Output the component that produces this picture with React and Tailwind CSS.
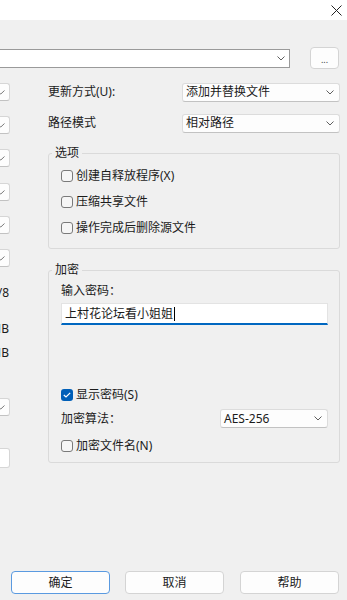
import React from 'react';

const font = "font-['Segoe_UI','Noto_Sans','Noto_Sans_CJK_SC',sans-serif]";

function Chevron() {
  return (
    <svg width="8" height="5" viewBox="0 0 8 5" fill="none">
      <path d="M0.5 0.5 L4 4 L7.5 0.5" stroke="#5f5f5f" strokeWidth="1" />
    </svg>
  );
}

function Combo({ text, className = '' }) {
  return (
    <div className={`flex h-[19px] items-center justify-between rounded-[3px] border border-[#dcdcdc] border-b-[#c2c2c2] bg-[#fdfdfd] pl-[3px] pr-[5px] ${className}`}>
      <span className="leading-[16px] text-[#1b1b1b]">{text}</span>
      <Chevron />
    </div>
  );
}

function Check({ label, checked }) {
  return (
    <div className="flex h-[16px] items-center">
      {checked ? (
        <span className="flex h-[12px] w-[12px] items-center justify-center rounded-[3px] bg-[#005fb8]">
          <svg width="8" height="6" viewBox="0 0 8 6" fill="none">
            <path d="M0.8 3 L3 5 L7.2 0.8" stroke="white" strokeWidth="1.2" />
          </svg>
        </span>
      ) : (
        <span className="h-[12px] w-[12px] rounded-[3px] border border-[#7a7a7a] bg-[#f6f6f6]" />
      )}
      <span className="ml-[3px] leading-[16px] text-[#1b1b1b]">{label}</span>
    </div>
  );
}

// left edge of the dialog is cut off: only the right ends of its widgets show
function EdgeBox({ className = '' }) {
  return (
    <div className={`flex h-[18px] w-[10px] items-center overflow-hidden rounded-r-[3px] border border-l-0 border-[#d6d6d6] border-b-[#c2c2c2] bg-[#fdfdfd] ${className}`}>
      <svg width="9" height="5" viewBox="0 0 9 5" fill="none">
        <path d="M-3 0.5 L0.8 4 L4.5 0.5" stroke="#7a7a7a" strokeWidth="1" />
      </svg>
    </div>
  );
}

function EdgeText({ text, className = '' }) {
  return (
    <div className={`flex h-[16px] w-[10px] justify-end overflow-hidden pr-[1px] ${className}`}>
      <span className="whitespace-nowrap leading-[16px] text-[#1b1b1b]">{text}</span>
    </div>
  );
}

function Group({ title, className = '', children }) {
  return (
    <fieldset className={`rounded-[3px] border border-[#dadada] pl-[12px] pr-[11px] ${className}`}>
      <legend className="ml-[-9px] px-[3px] leading-[16px] text-[#1b1b1b]">{title}</legend>
      {children}
    </fieldset>
  );
}

function Button({ label, primary, className = '' }) {
  return (
    <div
      className={`flex h-[23px] w-[99px] items-center justify-center rounded-[4px] border bg-[#fdfdfd] leading-[16px] text-[#1b1b1b] ${
        primary ? 'border-[#5a9ae0]' : 'border-[#d4d4d4]'
      } ${className}`}
    >
      {label}
    </div>
  );
}

export default function App() {
  return (
    <div className={`flex h-[600px] w-[347px] flex-col overflow-hidden bg-[#f0f0f0] text-[12px] ${font}`}>
      {/* ── Title bar ── */}
      <div className="flex h-[20px] items-center justify-end bg-white pr-[5px]">
        <svg width="11" height="11" viewBox="0 0 11 11" fill="none">
          <path d="M0.5 0.5 L10.5 10.5 M10.5 0.5 L0.5 10.5" stroke="#222" strokeWidth="1" />
        </svg>
      </div>

      {/* ── Archive path ── */}
      <div className="mt-[27px] flex h-[22px] items-center">
        <div className="flex h-[19px] w-[290px] items-center justify-end border border-l-0 border-[#9a9a9a] bg-white pr-[4px]">
          <Chevron />
        </div>
        <div className="ml-[20px] flex h-[22px] w-[29px] items-center justify-center rounded-[4px] border border-[#d4d4d4] bg-[#fdfdfd] pt-[3px] text-[9px] leading-[10px] text-[#444]">
          ...
        </div>
      </div>

      {/* ── Body ── */}
      <div className="mt-[14px] flex">
        <div className="flex w-[10px] flex-col">
          <EdgeBox />
          <EdgeBox className="mt-[15px]" />
          <EdgeBox className="mt-[15px]" />
          <EdgeBox className="mt-[16px]" />
          <EdgeBox className="mt-[15px]" />
          <EdgeBox className="mt-[15px]" />
          <EdgeText text="/8" className="mt-[18px]" />
          <EdgeText text="MB" className="mt-[20px]" />
          <EdgeText text="MB" className="mt-[8px]" />
          <EdgeBox className="mt-[37px]" />
          <div className="mt-[32px] h-[20px] w-[10px] rounded-r-[3px] border border-l-0 border-[#d6d6d6] bg-white" />
        </div>

        <div className="ml-[38px] flex w-[292px] flex-col">
          <div className="flex h-[18px] items-center">
            <span className="w-[134px] leading-[16px] text-[#1b1b1b]">更新方式(U):</span>
            <Combo text="添加并替换文件" className="h-[18px] flex-1" />
          </div>
          <div className="mt-[13px] flex h-[18px] items-center">
            <span className="w-[134px] leading-[16px] text-[#1b1b1b]">路径模式</span>
            <Combo text="相对路径" className="h-[18px] flex-1" />
          </div>

          <Group title="选项" className="mt-[13px] pb-[12px]">
            <div className="flex flex-col gap-[10px] pt-[7px]">
              <Check label="创建自释放程序(X)" />
              <Check label="压缩共享文件" />
              <Check label="操作完成后删除源文件" />
            </div>
          </Group>

          <Group title="加密" className="mt-[13px] pb-[8px]">
            <div className="flex flex-col">
              <span className="mt-[5px] leading-[16px] text-[#1b1b1b]">输入密码：</span>
              <div className="mt-[4px] flex h-[22px] items-center border border-[#e3e3e3] border-b-2 border-b-[#0067c0] bg-white pl-[3px]">
                <span className="leading-[16px] text-[#1b1b1b]">上村花论坛看小姐姐</span>
                <span className="ml-[1px] h-[14px] w-[1px] bg-black" />
              </div>
              <div className="mt-[62px]">
                <Check label="显示密码(S)" checked />
              </div>
              <div className="mt-[6px] flex h-[19px] items-center justify-between">
                <span className="leading-[16px] text-[#1b1b1b]">加密算法：</span>
                <Combo text="AES-256" className="w-[108px]" />
              </div>
              <div className="mt-[10px]">
                <Check label="加密文件名(N)" />
              </div>
            </div>
          </Group>
        </div>
      </div>

      {/* ── Buttons ── */}
      <div className="mt-auto flex pb-[6px] pl-[11px]">
        <Button label="确定" primary />
        <Button label="取消" className="ml-[15px]" />
        <Button label="帮助" className="ml-[16px]" />
      </div>
    </div>
  );
}
